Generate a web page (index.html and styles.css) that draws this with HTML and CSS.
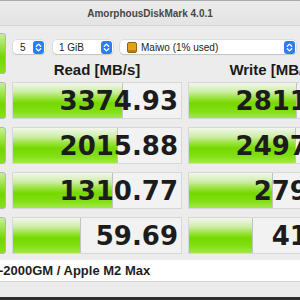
FILE: index.html
```html
<!DOCTYPE html>
<html lang="en">
<head>
    <meta charset="UTF-8">
    <title>AmorphousDiskMark 4.0.1</title>
    <link rel="stylesheet" href="styles.css">
</head>
<body>
    <div class="window">
        <div class="titlebar">AmorphousDiskMark 4.0.1</div>

        <div class="board">
            <div class="side-btn"></div>
            <div class="top">
                <div class="controls">
                    <div class="select sel-count">
                        <span>5</span>
                        <svg class="stepper" width="11" height="13" viewBox="0 0 11 13"><rect width="11" height="13" rx="3" fill="#2f7df6"/><path d="M3.3 5.2 L5.5 3.1 L7.7 5.2 M3.3 7.8 L5.5 9.9 L7.7 7.8" fill="none" stroke="#fff" stroke-width="1.3" stroke-linecap="round" stroke-linejoin="round"/></svg>
                    </div>
                    <div class="select sel-size">
                        <span>1 GiB</span>
                        <svg class="stepper" width="11" height="13" viewBox="0 0 11 13"><rect width="11" height="13" rx="3" fill="#2f7df6"/><path d="M3.3 5.2 L5.5 3.1 L7.7 5.2 M3.3 7.8 L5.5 9.9 L7.7 7.8" fill="none" stroke="#fff" stroke-width="1.3" stroke-linecap="round" stroke-linejoin="round"/></svg>
                    </div>
                    <div class="select sel-drive">
                        <svg class="drive" width="10" height="11" viewBox="0 0 10 11"><rect x="0.5" y="0.5" width="9" height="10" rx="1.5" fill="#e2a318" stroke="#8d6410"/><rect x="1" y="8" width="8" height="2" fill="#b98212"/></svg>
                        <span>Maiwo (1% used)</span>
                        <svg class="stepper" width="11" height="13" viewBox="0 0 11 13"><rect width="11" height="13" rx="3" fill="#2f7df6"/><path d="M3.3 5.2 L5.5 3.1 L7.7 5.2 M3.3 7.8 L5.5 9.9 L7.7 7.8" fill="none" stroke="#fff" stroke-width="1.3" stroke-linecap="round" stroke-linejoin="round"/></svg>
                    </div>
                </div>
                <div class="heads">
                    <div>Read [MB/s]</div>
                    <div>Write [MB/s]</div>
                </div>
            </div>

            <div class="side-btn"></div>
            <div class="cell"><div class="bar" style="width:110px"></div><span class="num">3374.93</span></div>
            <div class="cell"><div class="bar" style="width:108px"></div><span class="num">2811.46</span></div>

            <div class="side-btn"></div>
            <div class="cell"><div class="bar" style="width:105px"></div><span class="num">2015.88</span></div>
            <div class="cell"><div class="bar" style="width:107px"></div><span class="num">2497.31</span></div>

            <div class="side-btn"></div>
            <div class="cell"><div class="bar" style="width:100px"></div><span class="num">1310.77</span></div>
            <div class="cell"><div class="bar" style="width:84px"></div><span class="num">279.52</span></div>

            <div class="side-btn"></div>
            <div class="cell"><div class="bar" style="width:68px"></div><span class="num">59.69</span></div>
            <div class="cell"><div class="bar" style="width:64px"></div><span class="num">41.08</span></div>
        </div>

        <div class="status">-2000GM / Apple M2 Max</div>
    </div>
</body>
</html>
```

FILE: styles.css
```css
* {
    box-sizing: border-box;
    margin: 0;
    padding: 0;
}

body {
    width: 300px;
    height: 300px;
    overflow: hidden;
    background: #2e2e2e;
    font-family: 'Liberation Sans', Arial, sans-serif;
    color: #1e1e1e;
}

.window {
    height: 297px;
    background: #ececec;
    border-top: 1px solid #a9a9a9;
}

.titlebar {
    height: 25px;
    line-height: 25px;
    text-align: center;
    font-size: 10px;
    font-weight: bold;
    color: #474747;
    background: linear-gradient(#ebebeb, #e4e4e4);
    border-bottom: 1px solid #d3d3d3;
}

.board {
    display: grid;
    grid-template-columns: 60px 170px 170px;
    grid-template-rows: 41px repeat(4, 37px);
    column-gap: 6px;
    row-gap: 8px;
    margin-left: -54px;
    padding-top: 7px;
}

.side-btn {
    border: 1px solid #b5b5b5;
    border-radius: 3px;
    background: linear-gradient(#c6ef9c, #8fe030 40%, #74d600 60%, #86e020);
}

.top {
    grid-column: 2 / 4;
    display: flex;
    flex-direction: column;
}

.controls {
    display: flex;
    margin: 7px 0 0 1px;
    gap: 8px;
}

.select {
    height: 14px;
    display: flex;
    align-items: center;
    background: #fff;
    border-radius: 4px;
    box-shadow: 0 0 0 0.5px rgba(0,0,0,0.12), 0 1px 1px rgba(0,0,0,0.12);
    font-size: 10px;
    color: #222;
    padding-left: 7px;
}

.select span {
    flex: 1;
}

.stepper {
    margin-right: 1px;
}

.sel-count {
    width: 32px;
}

.sel-size {
    width: 60px;
    padding-left: 6px;
}

.sel-drive {
    width: 176px;
    margin-left: -1px;
}

.drive {
    margin-right: 4px;
}

.heads {
    display: grid;
    grid-template-columns: 170px 170px;
    column-gap: 6px;
    margin-top: 7px;
    font-size: 15px;
    font-weight: bold;
    text-align: center;
    color: #1a1a1a;
}

.cell {
    display: grid;
    background: #f2f2f2;
    border: 1px solid #d7d7d7;
    overflow: hidden;
}

.bar,
.num {
    grid-area: 1 / 1;
}

.bar {
    height: 100%;
    background: linear-gradient(#f3f6ef, #cdeea6 25%, #94e232 45%, #76d800 58%, #82df12 80%, #a2e84a);
    border-right: 1px solid #c3c3c3;
}

.num {
    align-self: center;
    justify-self: end;
    padding-right: 3px;
    font-family: 'DejaVu Sans', sans-serif;
    font-weight: bold;
    font-size: 26px;
    color: #1c1c1c;
}

.status {
    margin-top: 6px;
    height: 22px;
    line-height: 22px;
    background: #fff;
    border-bottom: 1px solid #d4d4d4;
    font-size: 13px;
    font-weight: bold;
    color: #1e1e1e;
    white-space: nowrap;
    text-indent: -1px;
}
```
